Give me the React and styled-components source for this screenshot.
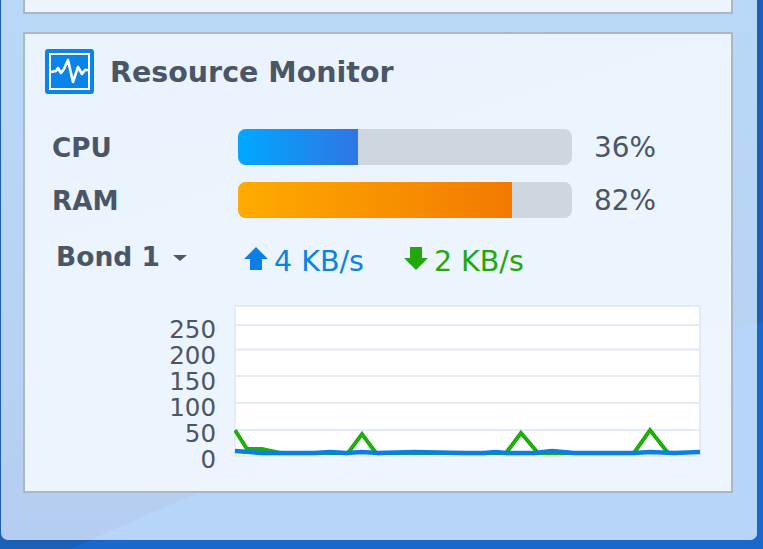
import React from 'react';
import styled, { createGlobalStyle } from 'styled-components';

const GlobalStyle = createGlobalStyle`
  html, body {
    margin: 0;
    padding: 0;
    width: 763px;
    height: 549px;
    overflow: hidden;
    background: #1c5fb6;
  }
  * { box-sizing: border-box; }
`;

const Desktop = styled.div`
  position: relative;
  width: 763px;
  height: 549px;
  padding: 0 6px 9px 1px;
  font-family: "DejaVu Sans", Verdana, sans-serif;
  color: #4a5665;
  background: #1c5fb6;

  /* the lighter wave of the wallpaper */
  &::before {
    content: '';
    position: absolute;
    inset: 0;
    background: #1a68cc;
    clip-path: polygon(70px 549px, 197px 493px, 400px 410px, 763px 322px, 763px 549px);
  }
`;

const Panel = styled.div`
  position: relative;
  height: 540px;
  padding: 0 24px 0 22px;
  border-radius: 0 0 7px 7px;
  overflow: hidden;
  background: linear-gradient(180deg, #b9d8f6 0%, #b7d3f4 60%, #b5cdf0 100%);

  &::before {
    content: '';
    position: absolute;
    inset: 0;
    background: #b7d5f8;
    clip-path: polygon(69px 549px, 196px 493px, 399px 410px, 763px 322px, 763px 549px);
  }
`;

const TopCard = styled.div`
  position: relative;
  height: 14px;
  margin-bottom: 18px;
  background: #edf4fd;
  border: 2px solid #a9b7c8;
  border-top: none;
`;

const Card = styled.section`
  position: relative;
  height: 461px;
  padding: 15px 20px 0 20px;
  background: linear-gradient(-17deg, #eef5fe 0%, #eaf3fd 100%);
  border: 2px solid #a9b7c8;
`;

const Header = styled.header`
  display: flex;
  align-items: center;
  gap: 16px;
  height: 45px;
  margin-bottom: 35px;
`;

const AppIcon = styled.svg`
  width: 49px;
  height: 45px;
  display: block;
`;

const Title = styled.h2`
  margin: 2px 0 0;
  font-size: 28.5px;
  font-weight: 700;
  white-space: nowrap;
`;

const MeterRow = styled.div`
  display: flex;
  align-items: center;
  height: 36px;
  margin-bottom: 17px;
  padding-left: 7px;
`;

const MeterLabel = styled.div`
  width: 186px;
  margin-top: 2px;
  font-size: 26.2px;
  font-weight: 700;
`;

const Track = styled.div`
  width: 334px;
  height: 36px;
  border-radius: 8px;
  overflow: hidden;
  background: #ced6e0;
`;

const Fill = styled.div`
  height: 100%;
  background: ${(p) => p.$gradient};
`;

const Percent = styled.div`
  margin-left: 22px;
  font-size: 27.9px;
`;

const NetRow = styled.div`
  display: flex;
  align-items: center;
  height: 48px;
  margin-top: -3px;
  padding-left: 11px;
`;

const BondSelect = styled.div`
  display: flex;
  align-items: center;
  width: 188px;
  gap: 13px;
  font-size: 26.5px;
  font-weight: 700;
`;

const Caret = styled.span`
  width: 0;
  height: 0;
  margin-top: 4px;
  border-left: 7px solid transparent;
  border-right: 7px solid transparent;
  border-top: 6px solid #4a5665;
`;

const Rate = styled.div`
  display: flex;
  align-items: center;
  gap: 6px;
  margin-top: 10px;
  margin-right: 40px;
  font-size: 28.5px;
  color: ${(p) => p.$color};
`;

const ArrowIcon = styled.svg`
  width: 24px;
  height: 24px;
  display: block;
  margin-top: -4px;
`;

const ChartArea = styled.div`
  display: flex;
  margin-top: 25px;
  padding-left: 7px;
`;

const Axis = styled.div`
  width: 164px;
  padding-top: 12px;
  text-align: right;
  font-size: 24.5px;
  line-height: 26px;
`;

const AxisLabel = styled.div`
  height: 26px;
`;

const Chart = styled.svg`
  width: 467px;
  height: 152px;
  margin-left: 18px;
  display: block;
`;

const meters = [
  { label: 'CPU', value: 36, gradient: 'linear-gradient(90deg, #00a8ff, #2f75e3)' },
  { label: 'RAM', value: 82, gradient: 'linear-gradient(90deg, #ffab00, #f27a00)' },
];

const axisValues = [250, 200, 150, 100, 50, 0];
const gridLines = [20, 44.5, 71, 98, 125];

const download = '1,125 13,144 28,144 46,148 114,148 128,129 142,148 272,148 287,128 304,148 400,148 416,125 434,148';
const upload = '1,146 28,148 80,148 96,147 112,148 128,147 144,148 180,147 230,148 250,148 262,147 272,148 300,148 318,146 340,148 400,148 416,147 440,148 466,147';

const App = () => {
  return (
    <Desktop>
      <GlobalStyle />
      <Panel>
        <TopCard />
        <Card>
          <Header>
            <AppIcon viewBox="0 0 49 45">
              <rect width="49" height="45" rx="3" fill="#0a84e8" />
              <rect x="5" y="5" width="39" height="35" fill="none" stroke="#fff" strokeWidth="2" />
              <path
                d="M6 23 L11 22 L13 19 L16 24 L19 20 L23 11 L28 33 L33 18 L37 25 L40 21 L44 21"
                fill="none"
                stroke="#fff"
                strokeWidth="2.6"
                strokeLinejoin="round"
              />
            </AppIcon>
            <Title>Resource Monitor</Title>
          </Header>

          {meters.map((m) => (
            <MeterRow key={m.label}>
              <MeterLabel>{m.label}</MeterLabel>
              <Track>
                <Fill $gradient={m.gradient} style={{ width: `${m.value}%` }} />
              </Track>
              <Percent>{m.value}%</Percent>
            </MeterRow>
          ))}

          <NetRow>
            <BondSelect>
              Bond 1
              <Caret />
            </BondSelect>
            <Rate $color="#0a84e0">
              <ArrowIcon viewBox="0 0 24 24">
                <path d="M12 0 L24 12 L18 12 L18 23 L6 23 L6 12 L0 12 Z" fill="#0a7fe6" />
              </ArrowIcon>
              4 KB/s
            </Rate>
            <Rate $color="#22a80f">
              <ArrowIcon viewBox="0 0 24 24">
                <path d="M6 0 L18 0 L18 11 L24 11 L12 23 L0 11 L6 11 Z" fill="#22a80f" />
              </ArrowIcon>
              2 KB/s
            </Rate>
          </NetRow>

          <ChartArea>
            <Axis>
              {axisValues.map((v) => (
                <AxisLabel key={v}>{v}</AxisLabel>
              ))}
            </Axis>
            <Chart viewBox="0 0 467 152">
              <rect x="1" y="1" width="465" height="150" fill="#fff" stroke="#e3ebf4" strokeWidth="2" />
              {gridLines.map((y) => (
                <line key={y} x1="1" x2="466" y1={y} y2={y} stroke="#e3ebf4" strokeWidth="2" />
              ))}
              <polyline points={download} fill="none" stroke="#1fae0c" strokeWidth="4" />
              <polyline points={upload} fill="none" stroke="#0a7fe0" strokeWidth="4.5" />
            </Chart>
          </ChartArea>
        </Card>
      </Panel>
    </Desktop>
  );
};

export default App;
